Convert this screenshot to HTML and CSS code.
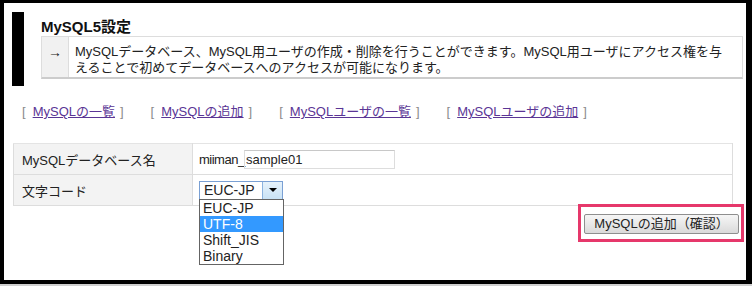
FILE: index.html
```html
<!DOCTYPE html>
<html lang="ja">
<head>
    <meta charset="UTF-8">
    <title>MySQL5設定</title>
    <link rel="stylesheet" href="styles.css">
</head>
<body>
<div id="frame">
    <!--見出し-->
    <div class="head">
        <div class="head-bar"></div>
        <div class="head-main">
            <h2>MySQL5設定</h2>
            <div class="desc">
                <div class="desc-arrow">→</div>
                <p class="desc-text">MySQLデータベース、MySQL用ユーザの作成・削除を行うことができます。MySQL用ユーザにアクセス権を与えることで初めてデータベースへのアクセスが可能になります。</p>
            </div>
        </div>
    </div>

    <!--メニュー-->
    <ul class="menu">
        <li><span class="br-l">[</span><a href="#">MySQLの一覧</a><span class="br-r">]</span></li>
        <li><span class="br-l">[</span><a href="#">MySQLの追加</a><span class="br-r">]</span></li>
        <li><span class="br-l">[</span><a href="#">MySQLユーザの一覧</a><span class="br-r">]</span></li>
        <li><span class="br-l">[</span><a href="#">MySQLユーザの追加</a><span class="br-r">]</span></li>
    </ul>

    <!--フォーム-->
    <table class="form">
        <tr>
            <th>MySQLデータベース名</th>
            <td>
                <div class="field">
                    <span class="prefix">miiman_</span>
                    <span class="text-input">sample01</span>
                </div>
            </td>
        </tr>
        <tr>
            <th>文字コード</th>
            <td>
                <div class="select">
                    <span class="select-value">EUC-JP</span>
                    <span class="select-btn"><span class="tri"></span></span>
                    <ul class="options">
                        <li>EUC-JP</li>
                        <li class="hover">UTF-8</li>
                        <li>Shift_JIS</li>
                        <li>Binary</li>
                    </ul>
                </div>
            </td>
        </tr>
    </table>

    <div class="submit-row">
        <div class="mark">
            <button id="submit">MySQLの追加（確認）</button>
        </div>
    </div>
</div>
</body>
</html>
```

FILE: styles.css
```css
*{
    margin: 0;
    padding: 0;
    border: 0;
    list-style: none;
    box-sizing: border-box;
    font-family: "Liberation Sans", "Noto Sans CJK JP", sans-serif;
}
html{
    background: #cfcfcf;
}
body{
    overflow: hidden;
}
#frame{
    width: 752px;
    height: 284px;
    background: #fff;
    border-style: solid;
    border-color: #000;
    border-width: 3px 6px 4px 4px;
    color: #222;
    font-size: 13px;
}
.head{
    display: flex;
    gap: 17px;
    padding: 9px 3px 0 8px;
}
.head-bar{
    width: 12px;
    height: 74px;
    background: #000;
}
.head-main{
    flex: 1;
}
.head-main h2{
    font-size: 15px;
    line-height: 19px;
    padding-top: 5px;
    color: #111;
}
.desc{
    display: flex;
    border: 1px solid #ddd;
    border-bottom: 2px solid #ccc;
}
.desc-arrow{
    width: 27px;
    background: #f1f1f1;
    border-right: 1px solid #ddd;
    text-align: center;
    line-height: 16px;
    padding-top: 7px;
    font-size: 14px;
}
.desc-text{
    flex: 1;
    padding: 7px 16px 1px 6px;
    line-height: 16px;
}
.menu{
    display: flex;
    gap: 17px;
    margin-top: 18px;
    padding-left: 13px;
    line-height: 16px;
}
.br-l, .br-r{
    color: #8a8a8a;
}
.br-l{
    padding: 0 7px 0 5px;
}
.br-r{
    padding: 0 5px 0 5px;
}
.menu a{
    color: #5a3595;
    text-decoration: underline;
}
.form{
    margin: 23px 0 0 9px;
    width: 720px;
    border-collapse: collapse;
}
.form th, .form td{
    height: 31px;
    border: 1px solid #ddd;
    text-align: left;
    vertical-align: middle;
    font-weight: normal;
}
.form th{
    width: 179px;
    background: #f3f3f3;
    padding-left: 8px;
}
.form td{
    padding-left: 6px;
}
.form tr:first-child th, .form tr:first-child td{
    border-top-color: #e4e4e4;
}
.field{
    display: flex;
    align-items: center;
}
.prefix{
    width: 45px;
    flex-shrink: 0;
    letter-spacing: -0.5px;
    white-space: nowrap;
}
.text-input{
    width: 151px;
    height: 19px;
    line-height: 17px;
    border: 1px solid #ddd;
    border-top-color: #c8c8c8;
    padding-left: 1px;
}
.select{
    position: relative;
    display: flex;
    width: 84px;
    height: 19px;
    border: 1px solid #7aa0d4;
    font-size: 14px;
    line-height: 17px;
}
.select-value{
    flex: 1;
    padding-left: 4px;
}
.select-btn{
    width: 20px;
    background: linear-gradient(#e6f2fb, #c9e2f5);
    border-left: 1px solid #8cb3df;
    display: flex;
    align-items: center;
    justify-content: center;
}
.tri{
    width: 0;
    height: 0;
    border-left: 4px solid transparent;
    border-right: 4px solid transparent;
    border-top: 4px solid #000;
}
.options{
    position: absolute;
    left: -1px;
    top: 17px;
    width: 85px;
    background: #fff;
    border: 1px solid #646464;
    z-index: 2;
}
.options li{
    height: 16px;
    line-height: 16px;
    padding-left: 3px;
}
.options li.hover{
    background: #3399ff;
    color: #fff;
}
.submit-row{
    display: flex;
    justify-content: flex-end;
    padding-right: 2px;
    margin-top: -2px;
}
.mark{
    border: 3px solid #e6386b;
    padding: 7px 0 5px 3px;
    width: 166px;
    height: 38px;
}
#submit{
    width: 155px;
    height: 20px;
    border: 1px solid #8e8e8e;
    border-radius: 2px;
    background: linear-gradient(#f6f6f6, #dadada);
    font-size: 13px;
    color: #222;
    line-height: 18px;
}
```
